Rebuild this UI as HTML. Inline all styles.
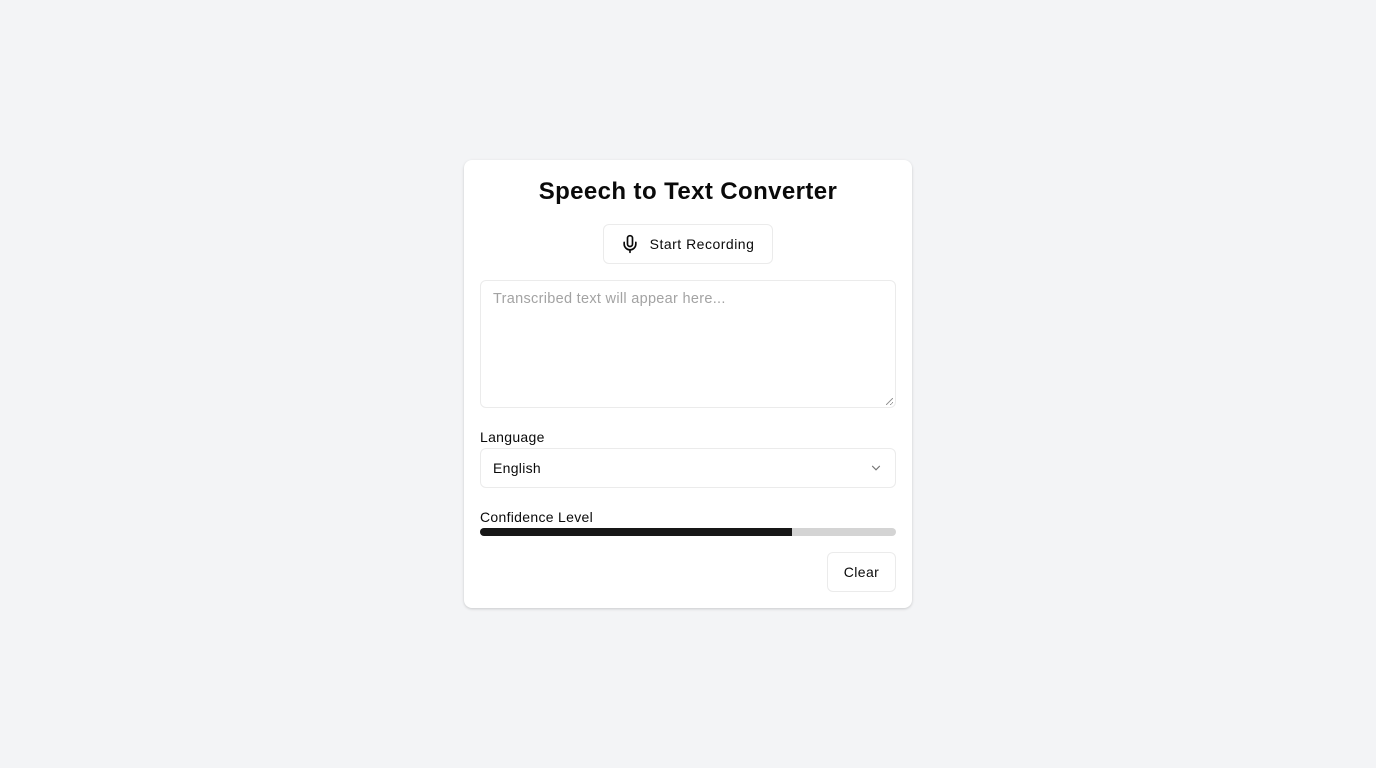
<!DOCTYPE html>
<html><head><meta charset="utf-8"><style>
*{box-sizing:border-box;margin:0;padding:0}
body{width:1376px;height:768px;background:#f3f4f6;font-family:"Liberation Sans",Arial,sans-serif;position:relative;overflow:hidden}
.card{position:absolute;left:464px;top:160px;width:448px;height:448px;background:#fff;border-radius:8px;box-shadow:0 1px 3px rgba(0,0,0,.12),0 1px 2px rgba(0,0,0,.06)}
h1{position:absolute;left:0;width:448px;top:16px;text-align:center;font-size:24px;font-weight:bold;color:#0a0a0a;line-height:32px;letter-spacing:0.4px}
.rec{position:absolute;left:139px;top:64px;width:170px;height:40px;border:1px solid #ebebeb;border-radius:6px;display:flex;align-items:center;justify-content:center;gap:10px;font-size:14px;letter-spacing:0.5px;color:#0a0a0a;padding-right:2px}
.ta{position:absolute;left:16px;top:120px;width:416px;height:128px;border:1px solid #ebebeb;border-radius:6px;padding:8px 12px;font-size:14.5px;letter-spacing:0.3px;color:#a3a3a3;line-height:20px}
.grip{position:absolute;right:2px;bottom:2px;width:7px;height:7px;background:linear-gradient(135deg,transparent 45%,#999 45%,#999 55%,transparent 55%,transparent 75%,#999 75%,#999 85%,transparent 85%)}
.lbl{position:absolute;left:16px;font-size:14px;letter-spacing:0.3px;color:#0a0a0a;line-height:18px}
.sel{position:absolute;left:16px;top:288px;width:416px;height:40px;border:1px solid #ebebeb;border-radius:6px;padding:0 12px;display:flex;align-items:center;justify-content:space-between;font-size:14px;letter-spacing:0.3px;color:#0a0a0a}
.bar{position:absolute;left:16px;top:368px;width:416px;height:8px;border-radius:4px;background:#d4d4d4;overflow:hidden}
.bar div{width:75%;height:100%;background:#171717}
.clear{position:absolute;left:363px;top:392px;width:69px;height:40px;border:1px solid #ebebeb;border-radius:6px;display:flex;align-items:center;justify-content:center;font-size:14px;letter-spacing:0.4px;color:#0a0a0a}
</style></head><body>
<div class="card">
<h1>Speech to Text Converter</h1>
<div class="rec"><svg width="20" height="20" viewBox="0 0 24 24" fill="none" stroke="#0a0a0a" stroke-width="2" stroke-linecap="round" stroke-linejoin="round"><path d="M12 2a3 3 0 0 0-3 3v7a3 3 0 0 0 6 0V5a3 3 0 0 0-3-3z"/><path d="M19 10v2a7 7 0 0 1-14 0v-2"/><line x1="12" y1="19" x2="12" y2="22"/></svg>Start Recording</div>
<div class="ta">Transcribed text will appear here...<div class="grip"></div></div>
<div class="lbl" style="top:268px">Language</div>
<div class="sel">English<svg width="14" height="14" viewBox="0 0 24 24" fill="none" stroke="#737373" stroke-width="2" stroke-linecap="round"><path d="m6 9 6 6 6-6"/></svg></div>
<div class="lbl" style="top:348px">Confidence Level</div>
<div class="bar"><div></div></div>
<div class="clear">Clear</div>
</div>
</body></html>
